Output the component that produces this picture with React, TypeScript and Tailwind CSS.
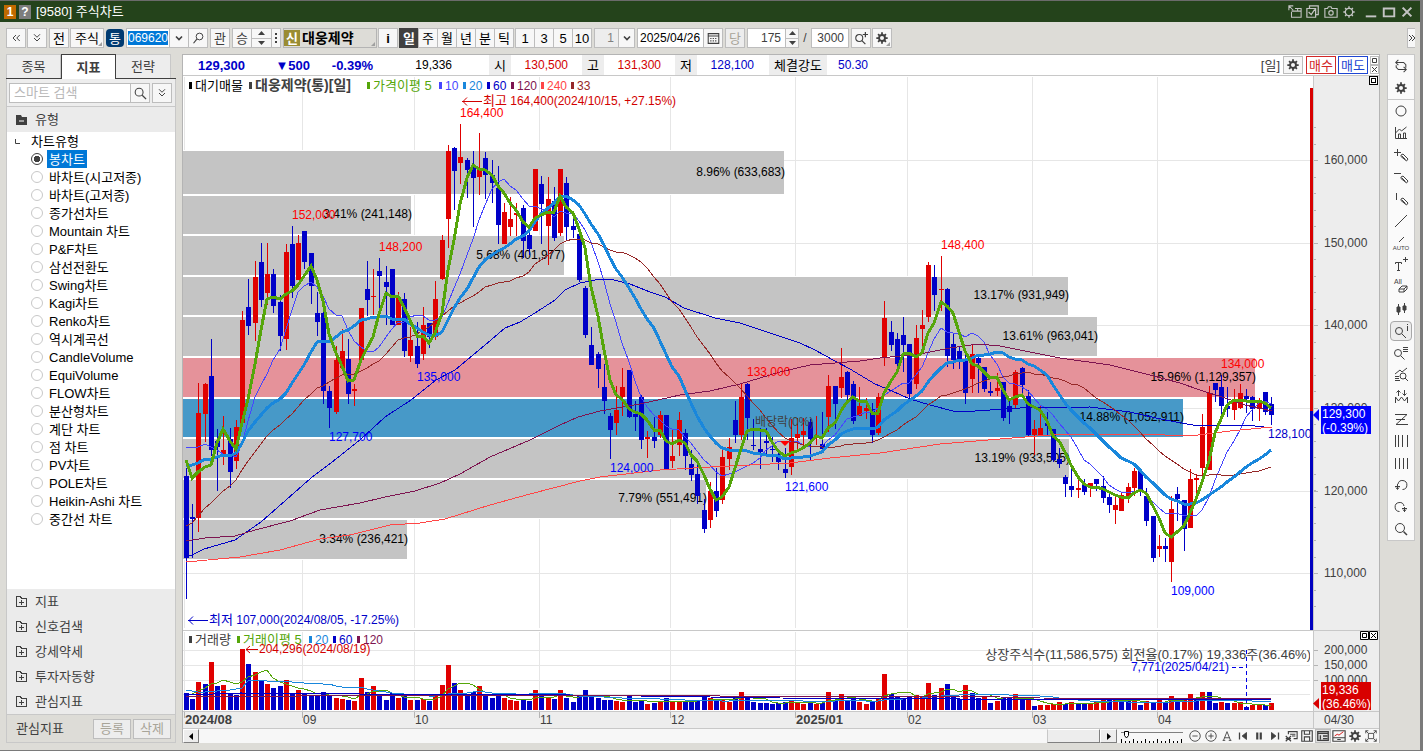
import type { ReactNode } from "react";
import { cva } from "class-variance-authority";
import clsx from "clsx";

// [direction, high, body top, body bottom, low] on the chart canvas, one row per session
type Candle = [1 | -1, number, number, number, number];

const CANDLES: Candle[] = [
  [-1, 468, 476, 558, 599], [-1, 504, 517, 519, 558], [1, 383, 413, 518, 532], [1, 383, 384, 414, 442], [-1, 339, 376, 450, 456],
  [-1, 429, 441, 447, 491], [1, 416, 450, 455, 465], [-1, 428, 439, 472, 488], [1, 420, 427, 461, 469], [1, 311, 320, 423, 425],
  [-1, 279, 307, 326, 335], [1, 261, 277, 323, 341], [-1, 243, 262, 300, 307], [1, 243, 274, 293, 305], [-1, 269, 274, 306, 313],
  [-1, 295, 302, 336, 351], [1, 244, 252, 339, 350], [-1, 226, 244, 286, 298], [1, 235, 243, 280, 280], [-1, 231, 231, 262, 269],
  [-1, 253, 253, 286, 304], [-1, 292, 313, 322, 336], [-1, 308, 313, 391, 404], [-1, 386, 391, 408, 428], [1, 346, 360, 412, 414],
  [1, 329, 351, 368, 368], [-1, 339, 359, 394, 404], [1, 384, 389, 391, 406], [1, 308, 308, 360, 360], [-1, 261, 289, 300, 316],
  [1, 269, 296, 297, 315], [-1, 258, 271, 276, 309], [-1, 266, 282, 287, 325], [-1, 269, 269, 325, 325], [1, 292, 298, 325, 325],
  [-1, 293, 299, 351, 357], [1, 327, 340, 356, 362], [-1, 322, 346, 364, 368], [1, 307, 325, 354, 360], [-1, 323, 323, 337, 348],
  [1, 281, 299, 337, 340], [1, 235, 240, 279, 280], [1, 145, 151, 219, 248], [-1, 147, 148, 171, 210], [1, 124, 157, 163, 184],
  [-1, 158, 160, 170, 198], [-1, 151, 168, 178, 227], [1, 133, 169, 177, 195], [-1, 152, 158, 175, 199], [-1, 160, 175, 183, 203],
  [-1, 166, 188, 225, 244], [1, 203, 212, 244, 244], [1, 197, 219, 227, 236], [1, 203, 213, 215, 236], [-1, 205, 208, 241, 258],
  [-1, 232, 235, 249, 255], [1, 169, 169, 231, 231], [-1, 176, 184, 204, 244], [1, 177, 199, 226, 265], [-1, 187, 201, 238, 241],
  [1, 169, 169, 233, 236], [-1, 177, 183, 227, 240], [-1, 213, 226, 230, 238], [-1, 231, 234, 280, 282], [-1, 286, 288, 335, 338],
  [-1, 327, 345, 365, 365], [-1, 352, 354, 369, 388], [-1, 364, 387, 401, 414], [-1, 413, 416, 430, 459], [1, 386, 410, 423, 435],
  [1, 368, 387, 397, 416], [-1, 370, 370, 417, 418], [-1, 401, 414, 417, 431], [-1, 395, 397, 440, 449], [1, 431, 437, 439, 458],
  [-1, 417, 437, 441, 448], [1, 411, 415, 435, 438], [-1, 415, 415, 470, 470], [1, 429, 456, 461, 468], [1, 412, 420, 445, 456],
  [-1, 429, 433, 456, 470], [-1, 450, 464, 475, 481], [-1, 465, 474, 496, 504], [-1, 499, 510, 529, 533], [1, 482, 491, 520, 528],
  [-1, 468, 491, 511, 517], [1, 449, 457, 500, 504], [1, 438, 447, 459, 470], [-1, 401, 420, 435, 443], [1, 384, 397, 435, 440],
  [-1, 383, 384, 418, 440], [-1, 419, 445, 446, 450], [-1, 428, 449, 452, 469], [-1, 428, 441, 443, 457], [-1, 437, 449, 450, 462],
  [-1, 449, 454, 462, 470], [-1, 448, 469, 473, 478], [1, 419, 438, 467, 475], [1, 418, 434, 438, 450], [1, 418, 431, 435, 445],
  [-1, 419, 422, 439, 460], [1, 416, 437, 438, 445], [-1, 412, 444, 449, 451], [1, 375, 386, 417, 432], [-1, 386, 386, 404, 429],
  [1, 348, 377, 388, 398], [-1, 371, 372, 395, 400], [-1, 381, 384, 421, 424], [1, 387, 406, 416, 416], [1, 398, 408, 411, 419],
  [-1, 403, 409, 435, 443], [1, 393, 397, 433, 435], [1, 301, 318, 358, 366], [-1, 321, 332, 345, 351], [-1, 333, 339, 364, 367],
  [-1, 317, 335, 345, 372], [-1, 344, 344, 394, 400], [1, 325, 338, 384, 389], [1, 310, 325, 329, 348], [1, 262, 265, 317, 322],
  [-1, 265, 277, 295, 311], [1, 256, 289, 290, 311], [-1, 288, 289, 356, 367], [-1, 333, 344, 360, 369], [-1, 347, 351, 359, 369],
  [-1, 355, 359, 393, 404], [1, 344, 354, 379, 393], [-1, 355, 358, 363, 393], [-1, 367, 367, 389, 392], [-1, 382, 391, 393, 396],
  [1, 373, 388, 391, 396], [-1, 382, 382, 418, 421], [-1, 400, 406, 412, 424], [1, 370, 372, 405, 408], [-1, 367, 368, 385, 394],
  [-1, 390, 396, 435, 436], [1, 420, 429, 435, 455], [1, 405, 428, 435, 435], [-1, 412, 423, 426, 435], [-1, 429, 429, 460, 462],
  [-1, 448, 459, 464, 468], [-1, 475, 477, 484, 497], [-1, 465, 486, 490, 497], [1, 477, 488, 490, 498], [-1, 479, 485, 492, 495],
  [1, 483, 483, 488, 497], [-1, 479, 479, 484, 491], [-1, 476, 486, 498, 503], [-1, 493, 497, 505, 513], [1, 497, 505, 510, 524],
  [1, 492, 495, 511, 511], [1, 483, 487, 498, 503], [1, 468, 471, 488, 496], [-1, 471, 471, 492, 496], [-1, 488, 496, 521, 526],
  [-1, 516, 516, 558, 562], [1, 535, 546, 549, 557], [-1, 538, 546, 549, 562], [1, 496, 509, 562, 582], [-1, 487, 494, 499, 521],
  [-1, 500, 500, 529, 551], [1, 469, 479, 528, 528], [1, 474, 478, 480, 495], [1, 414, 427, 468, 475], [1, 386, 393, 470, 470],
  [-1, 383, 383, 390, 402], [-1, 375, 387, 406, 417], [-1, 387, 406, 409, 417], [1, 389, 400, 410, 420], [1, 384, 393, 408, 409],
  [-1, 389, 396, 399, 413], [-1, 396, 397, 409, 421], [1, 398, 403, 409, 421], [-1, 392, 392, 412, 415], [-1, 397, 404, 415, 425],
];

// bar heights, negative when the volume bar is blue
const VOLUMES = [
  -17, -11, 28, -26, 48, -24, 25, -16, -15, 61, -46, 38, -30, 26, -22, -24, 30, -16, 20, -16,
  -14, -15, -18, -14, 12, 11, -10, 9, 32, -18, 24, -14, -10, -17, 12, -14, 10, -10, 11, -9,
  16, 25, 45, -27, 20, -16, -18, 24, -14, -12, -14, 12, 10, 9, -11, -9, 20, -14, 12, -11,
  20, -12, -8, -14, -20, -14, -12, -10, -10, 9, 8, -14, -8, -9, 6, -7, 9, -12, 8, 9,
  -8, -9, -10, -13, 12, -9, 10, 8, -14, 18, -13, -8, -7, -7, -6, -7, -8, 10, 7, 6,
  -8, 6, -7, 18, -9, 16, -10, -12, 8, 6, -9, 11, 36, -16, -13, -12, -14, 15, 13, 27,
  -15, 22, -26, -14, -11, 25, -17, -12, 13, -7, 9, -13, -12, 16, -11, 10, -4, 5, 5, 6,
  8, -6, 8, -7, -6, 7, 8, 10, -11, 11, -10, -9, 9, -5, 9, -8, 10, -7, 14, -10,
  10, 16, -10, 18, -18, -7, 8, -7, 7, 8, -3, 5, 6, -5, 7,
];

type Point = [number, number];

const MA60: Point[] = [
  [186, 556], [192, 555], [204, 549], [211, 547], [235, 540], [248, 531], [261, 522], [286, 500], [311, 478], [336, 459], [361, 439],
  [385, 417], [411, 400], [436, 380], [455, 370], [485, 345], [505, 328], [520, 322], [535, 313], [555, 300], [565, 290], [580, 283],
  [600, 279], [610, 279], [630, 284], [650, 292], [665, 297], [684, 308], [715, 318], [740, 323], [770, 333], [800, 343], [815, 350],
  [835, 361], [850, 369], [875, 384], [892, 391], [910, 399], [930, 405], [953, 411], [975, 411], [1020, 408], [1090, 407], [1130, 412],
  [1165, 420], [1193, 425], [1247, 425], [1272, 428],
];
const MA120: Point[] = [
  [186, 541], [205, 538], [235, 536], [255, 530], [290, 521], [320, 510], [360, 503], [385, 497], [415, 491], [440, 483], [460, 474],
  [490, 457], [530, 440], [560, 425], [578, 417], [600, 411], [640, 404], [680, 395], [710, 391], [740, 384], [780, 372], [810, 365],
  [860, 361], [880, 358], [920, 354], [950, 348], [978, 344], [1000, 346], [1060, 358], [1110, 365], [1150, 375], [1180, 383],
  [1200, 390], [1225, 398], [1245, 405], [1272, 411],
];
const MA240: Point[] = [
  [186, 562], [240, 557], [280, 550], [320, 539], [350, 535], [390, 525], [420, 523], [445, 519], [490, 505], [530, 494], [580, 481],
  [600, 477], [660, 470], [710, 467], [790, 463], [830, 458], [880, 453], [940, 444], [1000, 439], [1050, 435], [1140, 434],
  [1190, 436], [1230, 431], [1272, 427],
];

const STEP = 1085 / 174;
const barX = (i: number) => Math.round(186 + STEP * i);

// moving average; `lead` covers the sessions before the window is full
function average(values: number[], span: number, lead: number[]): Point[] {
  return values.map((_, i) => {
    if (i < lead.length) return [barX(i), lead[i]];
    const from = Math.max(0, i - span + 1);
    const part = values.slice(from, i + 1);
    return [barX(i), part.reduce((a, b) => a + b, 0) / part.length];
  });
}

const closes = CANDLES.map(([dir, , top, bottom]) => (dir > 0 ? top : bottom));
const volumeTops = VOLUMES.map((v) => 710 - Math.abs(v));

const MA5 = average(closes, 5, [460, 478, 472, 467]);
const MA10 = average(closes, 10, [447, 448, 447, 444, 447, 450, 454, 455, 457]);
const MA20 = average(closes, 20, [465, 465, 463, 459, 459, 457, 455, 456, 453, 443, 431, 422, 415, 408, 403, 399, 393, 383, 374]);
const MA33 = average(closes, 33, [
  526, 523, 516, 508, 503, 497, 491, 486, 480, 470, 461, 452, 444, 436, 430, 425, 419, 414, 407, 400, 394, 388, 386, 382, 378, 375, 374,
  374, 371, 368, 364, 361,
]);

const PROFILE = [
  { y: 151, h: 43, end: 784, label: "8.96% (633,683)", fill: "#c4c4c4" },
  { y: 196, h: 38, end: 411, label: "3.41% (241,148)", fill: "#c4c4c4" },
  { y: 236, h: 39, end: 564, label: "5.68% (401,977)", fill: "#c4c4c4" },
  { y: 277, h: 38, end: 1068, label: "13.17% (931,949)", fill: "#c4c4c4" },
  { y: 317, h: 39, end: 1097, label: "13.61% (963,041)", fill: "#c4c4c4" },
  { y: 358, h: 39, end: 1255, label: "15.96% (1,129,357)", fill: "#e5929a" },
  { y: 399, h: 38, end: 1183, label: "14.88% (1,052,911)", fill: "#4799c8" },
  { y: 439, h: 39, end: 1069, label: "13.19% (933,505)", fill: "#c4c4c4" },
  { y: 480, h: 38, end: 706, label: "7.79% (551,491)", fill: "#c4c4c4" },
  { y: 520, h: 39, end: 407, label: "3.34% (236,421)", fill: "#c4c4c4" },
];

const MARKS = [
  { x: 460, y: 117, text: "164,400", fill: "#f00" },
  { x: 292, y: 219, text: "152,000", fill: "#f00" },
  { x: 379, y: 251, text: "148,200", fill: "#f00" },
  { x: 417, y: 381, text: "135,000", fill: "#00f" },
  { x: 329, y: 441, text: "127,700", fill: "#00f" },
  { x: 610, y: 472, text: "124,000", fill: "#00f" },
  { x: 747, y: 376, text: "133,000", fill: "#f00" },
  { x: 785, y: 491, text: "121,600", fill: "#00f" },
  { x: 941, y: 249, text: "148,400", fill: "#f00" },
  { x: 1221, y: 368, text: "134,000", fill: "#f00" },
  { x: 1171, y: 595, text: "109,000", fill: "#00f" },
  { x: 1268, y: 438, text: "128,100", fill: "#0000c8" },
];

const MONTHS = [
  { x: 184, label: "2024/08", year: true },
  { x: 302, label: "09" },
  { x: 414, label: "10" },
  { x: 539, label: "11" },
  { x: 670, label: "12" },
  { x: 795, label: "2025/01", year: true },
  { x: 907, label: "02" },
  { x: 1032, label: "03" },
  { x: 1157, label: "04" },
];

const PRICE_LEGEND = [
  { x: 189, label: "대기매물", fill: "#000" },
  { x: 249, label: "대웅제약(통)[일]", fill: "#404040", bold: true },
  { x: 367, label: "가격이평 5", fill: "#55a60a" },
  { x: 439, label: "10", fill: "#4646ff" },
  { x: 463, label: "20", fill: "#1987dc" },
  { x: 487, label: "60", fill: "#0000c8" },
  { x: 511, label: "120", fill: "#7d1450" },
  { x: 541, label: "240", fill: "#ff4646" },
  { x: 571, label: "33", fill: "#962828" },
];

const VOLUME_LEGEND = [
  { x: 189, label: "거래량", fill: "#404040" },
  { x: 237, label: "거래이평 5", fill: "#55a60a" },
  { x: 309, label: "20", fill: "#1987dc" },
  { x: 333, label: "60", fill: "#0000c8" },
  { x: 357, label: "120", fill: "#7d1450" },
];

const CHART_TYPES = [
  "봉차트", "바차트(시고저종)", "바차트(고저종)", "종가선차트", "Mountain 차트", "P&F차트", "삼선전환도", "Swing차트", "Kagi차트",
  "Renko차트", "역시계곡선", "CandleVolume", "EquiVolume", "FLOW차트", "분산형차트", "계단 차트", "점 차트", "PV차트", "POLE차트",
  "Heikin-Ashi 차트", "중간선 차트",
];

const GROUPS = ["지표", "신호검색", "강세약세", "투자자동향", "관심지표"];

const button = cva("flex shrink-0 items-center justify-center border text-[13px] leading-none", {
  variants: {
    tone: {
      normal: "border-[#bdbdbd] bg-[#f7f7f7] text-black",
      icon: "border-[#bdbdbd] bg-[#f7f7f7] text-[#404040]",
      active: "border-[#404040] bg-[#404040] font-bold text-white",
      muted: "border-[#bdbdbd] bg-[#ededed] text-[#a8a498]",
      flat: "border-[#b4b4b4] bg-[#dddcd7] font-bold text-black",
    },
    height: { normal: "h-5", small: "h-[18px]" },
  },
  defaultVariants: { tone: "normal", height: "normal" },
});

function Icon({ children, size = 16, className }: { children: ReactNode; size?: number; className?: string }) {
  return (
    <svg width={size} height={size} viewBox="0 0 16 16" fill="none" stroke="currentColor" className={clsx("shrink-0 overflow-visible", className)} aria-hidden="true">
      {children}
    </svg>
  );
}

const Gear = ({ size = 14, hollow = false }: { size?: number; hollow?: boolean }) => (
  <Icon size={size}>
    <path d="M8 1.500v3M8 11.500v3M1.500 8h3M11.500 8h3M3.500 3.500l2 2M10.500 10.500l2 2M12.500 3.500l-2 2M5.500 10.500l-2 2" strokeWidth={hollow ? 1.6 : 2} />
    <circle cx="8" cy="8" r={hollow ? 4.2 : 3.4} strokeWidth={hollow ? 1.5 : 2.2} />
  </Icon>
);

const Lens = ({ size = 14 }: { size?: number }) => (
  <Icon size={size}>
    <circle cx="7" cy="7" r="4.500" strokeWidth="1.2" />
    <path d="M10.500 10.500L15 15" strokeWidth="1.500" />
  </Icon>
);

const Chevrons = ({ dir }: { dir: "left" | "down" }) => (
  <Icon size={12}>
    {dir === "left" && <path d="M8 4L4 8l4 4M13 4L9 8l4 4" strokeWidth="1.3" />}
    {dir === "down" && <path d="M4 3l4 4 4-4M4 8l4 4 4-4" strokeWidth="1.3" />}
  </Icon>
);

const Caret = () => (
  <Icon size={12}>
    <path d="M4 6l4 4 4-4" strokeWidth="2.2" />
  </Icon>
);

function Spinner({ label, className }: { label: string; className?: string }) {
  return (
    <div className={clsx("-ml-px flex h-5 flex-col border border-[#bdbdbd] bg-[#f7f7f7]", className)}>
      <button aria-label={`${label} 증가`} className="flex flex-1 items-center justify-center border-b border-[#bdbdbd]">
        <svg width="7" height="4"><path d="M0 4L3.500 0L7 4z" fill="#404040" /></svg>
      </button>
      <button aria-label={`${label} 감소`} className="flex flex-1 items-center justify-center">
        <svg width="7" height="4"><path d="M0 0L3.500 4L7 0z" fill="#404040" /></svg>
      </button>
    </div>
  );
}

function TitleBar() {
  return (
    <header className="flex h-[22px] shrink-0 items-center border-t border-[#6b6b6b] bg-[#24431b] pl-1 text-white">
      <span className="flex h-3.5 w-3 items-center justify-center bg-[#c06a00] text-[12px] leading-none font-bold">1</span>
      <span className="ml-[3px] flex h-3.5 w-3 items-center justify-center bg-[#7d7d7d] text-[12px] leading-none font-bold">?</span>
      <h1 className="ml-[5px] text-[13px] leading-none">[9580] 주식차트</h1>
      <div className="ml-auto flex items-center gap-1 pr-1.5 text-[#c4c4c4]">
        <button aria-label="창 분리">
          <Icon size={14}><path d="M1 6V1h5M1 1l5 5M8 4h7v10H4V8M4 7h11M11 4v3" strokeWidth="1.2" /></Icon>
        </button>
        <button aria-label="창 복사">
          <Icon size={14}><path d="M1 4h10v10H1zM4 4V1h10v10h-3M3 8l3 3 4-6" strokeWidth="1.4" /></Icon>
        </button>
        <button aria-label="화면 캡처">
          <Icon size={14}><path d="M1 4h3l1-2h3l1 2h6v10H1z" strokeWidth="1.3" /><circle cx="8" cy="9" r="2.500" strokeWidth="1.3" /></Icon>
        </button>
        <button aria-label="설정"><Gear hollow /></button>
        <button aria-label="최소화" className="ml-1">
          <Icon size={14}><path d="M2 13h12" strokeWidth="2.200" /></Icon>
        </button>
        <button aria-label="최대화">
          <Icon size={14}><path d="M2 4h12v9H2z" strokeWidth="2.200" /></Icon>
        </button>
        <button aria-label="닫기">
          <Icon size={14}><path d="M3 3l10 10M13 3L3 13" strokeWidth="2.4" /></Icon>
        </button>
      </div>
    </header>
  );
}

function Toolbar() {
  return (
    <div className="flex h-8 shrink-0 items-center gap-0.5 pl-1.5 text-[#404040]">
      <div className="flex gap-px">
        <button className={clsx(button({ tone: "icon" }), "w-5")} aria-label="이전"><Chevrons dir="left" /></button>
        <button className={clsx(button({ tone: "icon" }), "w-5")} aria-label="펼치기"><Chevrons dir="down" /></button>
      </div>
      <div className="flex gap-px">
        <button className={clsx(button(), "w-5")}>전</button>
        <button className={clsx(button(), "relative w-[34px]")}>
          주식
          <Corner />
        </button>
      </div>
      <button className="flex h-[18px] w-[18px] items-center justify-center rounded-sm bg-[#003a70] text-[13px] leading-none text-white">통</button>
      <div className="flex">
        <div className="flex h-5 w-11 items-center border border-[#bdbdbd] bg-white px-px">
          <input aria-label="종목코드" defaultValue="069620" className="h-3.5 w-10 bg-[#0078d7] text-[12px] leading-none text-white outline-none" />
        </div>
        <button className={clsx(button({ tone: "icon" }), "-ml-px w-5")} aria-label="최근 종목"><Caret /></button>
        <button className={clsx(button({ tone: "icon" }), "-ml-px w-5")} aria-label="종목 찾기">
          <Icon size={12}><circle cx="10" cy="6" r="4.500" strokeWidth="1.3" /><path d="M6.500 9.500L2 15" strokeWidth="1.500" /></Icon>
        </button>
      </div>
      <button className={clsx(button({ tone: "icon" }), "w-5")}>관</button>
      <div className="flex">
        <button className={clsx(button({ tone: "icon" }), "w-5")}>승</button>
        <Spinner label="종목" className="w-[21px]" />
        <button className={clsx(button({ tone: "icon" }), "-ml-px w-2.5")} aria-label="더 보기">
          <svg width="2" height="11" fill="#404040"><path d="M0 0h2v2H0zM0 4h2v2H0zM0 8h2v2H0z" /></svg>
        </button>
      </div>
      <div className="flex gap-px">
        <button className={clsx(button({ tone: "flat" }), "relative w-[94px] gap-0.5")}>
          <span className="flex h-4 w-4 items-center justify-center bg-[#9a8c32] text-white">신</span>
          <span className="flex-1 text-left text-[14px]">대웅제약</span>
          <Corner />
        </button>
        <button className={clsx(button(), "w-5 font-bold")} aria-label="종목정보">i</button>
        <div className="flex">
          {["일", "주", "월", "년", "분", "틱"].map((p, i) => (
            <button key={p} className={clsx(button({ tone: i === 0 ? "active" : "normal" }), "w-5", i > 0 && "-ml-px")}>
              {p}
            </button>
          ))}
        </div>
      </div>
      <div className="flex">
        {["1", "3", "5", "10"].map((n) => (
          <button key={n} className={clsx(button(), "-ml-px w-5")}>{n}</button>
        ))}
      </div>
      <div className="flex">
        <input aria-label="분 단위" defaultValue="1" className="h-5 w-[25px] border border-[#bdbdbd] bg-[#ededed] pr-1 text-right text-[12px] text-[#808080]" />
        <button className={clsx(button({ tone: "icon" }), "-ml-px w-[17px]")} aria-label="분 단위 선택"><Caret /></button>
      </div>
      <div className="flex">
        <input aria-label="조회일" defaultValue="2025/04/26" className="h-5 w-[67px] border border-[#bdbdbd] bg-white px-0.5 text-[12px] text-black" />
        <button className={clsx(button({ tone: "icon" }), "-ml-px w-5")} aria-label="달력">
          <Icon size={13}><path d="M1.500 2h13v12h-13zM1 5h14" strokeWidth="1.300" /><path d="M4 8h9M4 11h9" strokeDasharray="1.500 1.500" strokeWidth="1.500" /></Icon>
        </button>
      </div>
      <button className={clsx(button({ tone: "muted" }), "w-5")}>당</button>
      <div className="flex">
        <input aria-label="표시 봉 수" defaultValue="175" className="h-5 w-[39px] border border-[#bdbdbd] bg-white pr-1 text-right text-[12px]" />
        <Spinner label="표시 봉 수" className="w-3.5" />
      </div>
      <span className="w-2 text-center text-[12px] leading-none">/</span>
      <input aria-label="전체 봉 수" defaultValue="3000" className="h-5 w-[38px] border border-[#bdbdbd] bg-white pr-1 text-right text-[12px]" />
      <div className="flex gap-px">
        <button className={clsx(button({ tone: "icon" }), "w-5")} aria-label="확대">
          <Icon size={14}><circle cx="6" cy="8" r="4" strokeWidth="1.200" /><path d="M9 11l4 4M10 4h6M13 1v6" strokeWidth="1.400" /></Icon>
        </button>
        <button className={clsx(button({ tone: "icon" }), "relative w-5")} aria-label="차트 설정"><Gear /><Corner /></button>
      </div>
      <button className="mr-[5px] ml-auto flex h-5 w-2 items-center justify-center border border-r-0 border-[#bdbdbd] bg-[#f7f7f7]" aria-label="도구모음 펼치기">
        <svg width="6" height="6" fill="none" stroke="#404040" aria-hidden="true"><path d="M0 0l3 3-3 3M3 0l3 3-3 3" /></svg>
      </button>
    </div>
  );
}

const Corner = () => (
  <svg width="4" height="4" className="absolute right-px bottom-px" aria-hidden="true">
    <path d="M4 0v4H0z" fill="#a0a0a0" />
  </svg>
);

function Sidebar() {
  return (
    <aside className="ml-1.5 flex w-[170px] shrink-0 flex-col text-[13px] leading-none text-[#404040]">
      <div className="flex h-[25px] shrink-0 border-b border-[#404040]">
        <button className="w-[55px] border border-b-0 border-[#c8c8c8] bg-[#ededed]">종목</button>
        <button className="-mb-px w-[55px] border border-b-0 border-[#404040] bg-white font-bold">지표</button>
        <button className="w-[55px] border border-b-0 border-l-0 border-[#c8c8c8] bg-[#ededed]">전략</button>
      </div>
      <div className="flex min-h-0 flex-1 flex-col border border-t-0 border-[#c8c8c8] bg-white">
        <div className="flex h-7 shrink-0 items-center border-b border-[#c8c8c8] bg-[#ededed] px-0.5">
          <input aria-label="스마트 검색" placeholder="스마트 검색" className="h-5 w-[122px] border border-[#bdbdbd] bg-white px-1 placeholder:text-[#b8b8b8]" />
          <button className={clsx(button({ tone: "icon" }), "-ml-px w-5")} aria-label="검색"><Lens /></button>
          <button className={clsx(button({ tone: "icon" }), "ml-0.5 w-5")} aria-label="검색 옵션"><Chevrons dir="down" /></button>
        </div>
        <h2 className="flex h-[25px] shrink-0 items-center gap-2 bg-[#ebebeb] pl-[9px]">
          <svg width="11" height="10" aria-hidden="true">
            <path d="M0 0h5l1 2h5v8H0z" fill="#404040" />
            <path d="M3 6h5" stroke="#fff" />
          </svg>
          유형
        </h2>
        <fieldset className="min-h-0 flex-1 overflow-hidden text-black">
          <div className="flex h-[18px] items-center">
            <svg width="5" height="5" className="mr-[11px] ml-2" aria-hidden="true"><path d="M.5 0v4.500H5" fill="none" stroke="#404040" /></svg>
            <legend>차트유형</legend>
          </div>
          {CHART_TYPES.map((type, i) => (
            <label key={type} className="flex h-[18px] items-center gap-1 pl-6">
              <input
                type="radio"
                name="chart-type"
                defaultChecked={i === 0}
                className="h-3 w-3 appearance-none rounded-full border border-[#c8c8c8] bg-white checked:border-[#404040] checked:bg-[radial-gradient(circle,#404040_45%,#fff_50%)]"
              />
              <span className={clsx("flex h-[18px] items-center px-0.5", i === 0 && "bg-[#0078d7] text-white")}>{type}</span>
            </label>
          ))}
        </fieldset>
        <ul className="shrink-0 bg-[#ebebeb]">
          {GROUPS.map((g) => (
            <li key={g}>
              <button className="flex h-[25px] w-full items-center gap-2 pl-[9px]">
                <svg width="11" height="11" fill="none" stroke="#404040" aria-hidden="true">
                  <path d="M.5 .5h4l1 2h5v8H.5zM3 6.500h5M5.500 4v5" shapeRendering="crispEdges" />
                </svg>
                {g}
              </button>
            </li>
          ))}
        </ul>
        <div className="flex h-7 shrink-0 items-center border-t border-[#c8c8c8] bg-[#dddcd7] pl-[9px]">
          관심지표
          <button className={clsx(button({ tone: "muted" }), "ml-auto w-[38px]")}>등록</button>
          <button className={clsx(button({ tone: "muted" }), "mr-1 ml-0.5 w-[38px]")}>삭제</button>
        </div>
      </div>
    </aside>
  );
}

function QuoteBar() {
  return (
    <div className="flex h-[21px] shrink-0 items-center border-b border-[#c8c8c8] text-[12px] leading-none">
      <b className="w-[62px] text-right text-[13px] text-[#0000c8]">129,300</b>
      <b className="w-[65px] text-right text-[13px] text-[#0000c8]">▼500</b>
      <b className="w-[63px] text-right text-[13px] text-[#0000c8]">-0.39%</b>
      <span className="w-[79px] text-right">19,336</span>
      <Quote label="시" value="130,500" first />
      <Quote label="고" value="131,300" />
      <Quote label="저" value="128,100" low />
      <span className="ml-[15px] flex h-5 w-[58px] items-center justify-center bg-[#ededed] text-[13px]">체결강도</span>
      <span className="w-[41px] text-right text-[#0000c8]">50.30</span>
      <span className="ml-auto text-[13px] text-[#404040]">[일]</span>
      <button className={clsx(button({ tone: "icon", height: "small" }), "mx-[3px] w-5")} aria-label="차트 설정"><Gear /></button>
      <button className="mr-0.5 h-[18px] w-[30px] border border-[#d22828] text-[13px] text-[#d22828]">매수</button>
      <button className="mr-0.5 h-[18px] w-[30px] border border-[#1e46d2] text-[13px] text-[#1e46d2]">매도</button>
      <div className="flex flex-col">
        <button className="flex h-[9px] w-[9px] items-center justify-center border border-[#bdbdbd]" aria-label="최대화">
          <svg width="5" height="5"><path d="M.5 .5h4v4h-4z" fill="none" stroke="#404040" /></svg>
        </button>
        <button className="flex h-[9px] w-[9px] items-center justify-center border border-[#bdbdbd]" aria-label="닫기">
          <svg width="5" height="5"><path d="M0 0l5 5M5 0L0 5" stroke="#404040" /></svg>
        </button>
      </div>
    </div>
  );
}

function Quote({ label, value, low = false, first = false }: { label: string; value: string; low?: boolean; first?: boolean }) {
  return (
    <>
      <span className={clsx("flex h-5 w-[22px] items-center justify-center bg-[#ededed] text-[13px]", first ? "ml-[37px]" : "ml-3.5")}>{label}</span>
      <span className={clsx("w-[57px] text-right", low ? "text-[#0000c8]" : "text-[#d20000]")}>{value}</span>
    </>
  );
}

function Line({ points, color, width = 1 }: { points: Point[]; color: string; width?: number }) {
  return <polyline points={points.map(([x, y]) => `${x},${Math.round(y)}`).join(" ")} fill="none" stroke={color} strokeWidth={width} shapeRendering="crispEdges" />;
}

function Legend({ items, y }: { items: { x: number; label: string; fill: string; bold?: boolean }[]; y: number }) {
  return (
    <>
      {items.map((item) => (
        <g key={item.x} fill={item.fill}>
          <rect x={item.x} y={y - 8} width="3" height="7" />
          <text x={item.x + 6} y={y} className={item.bold ? "text-[14px] font-bold" : /[가-힣]/.test(item.label) ? "text-[13px]" : "text-[12px]"}>
            {item.label}
          </text>
        </g>
      ))}
    </>
  );
}

function PricePane() {
  return (
    <svg className="block min-h-0 w-full flex-1 text-[12px]" role="img" aria-label="대웅제약 일봉 차트">
      <g transform="translate(-183 -76)">
        <g fill="#e6e6e6">
          {MONTHS.map((m) => <rect key={m.x} x={m.x} y="77" width="1" height="551" />)}
          {[160, 243, 325, 408, 491, 573].map((y) => <rect key={y} x="183" y={y} width="1128" height="1" />)}
        </g>
        {PROFILE.map((p) => (
          <g key={p.y}>
            <rect x="183" y={p.y - 1} width={p.end - 183} height={p.h + 2} fill="#fff" />
            <rect x="183" y={p.y} width={p.end - 183} height={p.h} fill={p.fill} />
            <text x={p.end + 1} y={p.y + Math.round(p.h / 2) + 3} textAnchor="end">{p.label}</text>
          </g>
        ))}
        <g shapeRendering="crispEdges">
          {CANDLES.map(([dir, high, top, bottom, low], i) => (
            <g key={i} fill={dir > 0 ? "#e00000" : "#0000c8"}>
              <rect x={barX(i)} y={high} width="1" height={low - high} />
              <rect x={barX(i) - 2} y={top} width="5" height={Math.max(1, bottom - top)} />
            </g>
          ))}
        </g>
        <Line points={MA10} color="#4646ff" />
        <Line points={MA60} color="#0000c8" />
        <Line points={MA120} color="#7d1450" />
        <Line points={MA240} color="#ff4646" />
        <Line points={MA33} color="#962828" />
        <Line points={MA20} color="#1987dc" width={3} />
        <Line points={MA5} color="#55a60a" width={3} />
        <text x="755" y="426" fill="#404040">배당락(0%)</text>
        <path d="M780 441h10l-5 5z" fill="#f00" />
        {MARKS.map((m) => <text key={m.text} x={m.x} y={m.y} fill={m.fill}>{m.text}</text>)}
        <path d="M482 101.500H462M467 97.500l-4 4l4 4" fill="none" stroke="#d20000" />
        <text x="483" y="105" fill="#d20000"><tspan className="text-[13px]">최고</tspan> 164,400(2024/10/15, +27.15%)</text>
        <path d="M208 620.500H188M193 616.500l-4 4l4 4" fill="none" stroke="#0000c8" />
        <text x="209" y="624" fill="#0000c8"><tspan className="text-[13px]">최저</tspan> 107,000(2024/08/05, -17.25%)</text>
        <Legend items={PRICE_LEGEND} y={90} />
      </g>
    </svg>
  );
}

function VolumePane() {
  return (
    <svg className="block h-20 w-full shrink-0 text-[12px]" role="img" aria-label="거래량">
      <g transform="translate(-183 -631)">
        <g fill="#e6e6e6">
          {MONTHS.map((m) => <rect key={m.x} x={m.x} y="632" width="1" height="79" />)}
          {[650, 665, 680, 694].map((y) => <rect key={y} x="183" y={y} width="1128" height="1" />)}
        </g>
        {VOLUMES.map((v, i) => (
          <rect key={i} x={barX(i) - 2} y={710 - Math.abs(v)} width="5" height={Math.abs(v)} fill={v > 0 ? "#e00000" : "#0000c8"} />
        ))}
        <Line points={average(volumeTops, 5, [694, 694, 691, 688])} color="#55a60a" />
        <Line points={average(volumeTops, 20, [690, 691, 692, 692, 691, 691, 690, 690, 689, 688])} color="#1987dc" />
        <Line points={[[186, 695], [240, 693], [360, 694], [500, 694], [640, 696], [780, 698], [960, 699], [1271, 700]]} color="#0000c8" />
        <Line points={[[186, 697], [300, 696], [500, 695], [720, 696], [960, 696], [1040, 698], [1271, 699]]} color="#7d1450" />
        <Legend items={VOLUME_LEGEND} y={644} />
        <path d="M258 649.500H246M250 646l-4 3.500l4 3.500" fill="none" stroke="#d20000" />
        <text x="259" y="653" fill="#d20000">204,296(2024/08/19)</text>
        <text x="1311" y="659" textAnchor="end" fill="#404040" className="text-[13px]">상장주식수(11,586,575) 회전율(0.17%) 19,336주(36.46%)</text>
        <text x="1229" y="671" textAnchor="end" fill="#0000e6">7,771(2025/04/21)</text>
        <path d="M1232 667.500h14M1246.500 650v60" stroke="#0000e6" strokeDasharray="4 3" fill="none" />
      </g>
    </svg>
  );
}

const AXIS_LABELS = [
  { y: 160, label: "160,000" },
  { y: 243, label: "150,000" },
  { y: 325, label: "140,000" },
  { y: 408, label: "130,000" },
  { y: 491, label: "120,000" },
  { y: 573, label: "110,000" },
];

function PriceAxis() {
  return (
    <svg className="block min-h-0 w-full flex-1 text-[12px]" role="img" aria-label="가격 축">
      <g transform="translate(-1311 -76)">
        <rect x="1314" y="76" width="1" height="2000" fill="#c8c8c8" />
        <rect x="1315" y="76" width="65" height="2000" fill="#ededed" />
        <rect x="1311" y="88" width="3" height="323" fill="#d80000" />
        <rect x="1311" y="411" width="3" height="219" fill="#0000c0" />
        {Array.from({ length: 30 }, (_, i) => (
          <rect key={i} x="1315" y={Math.round(127 + i * 16.52)} width="2" height="1" fill="#b4b4b4" />
        ))}
        {AXIS_LABELS.map((a) => (
          <g key={a.y}>
            <rect x="1315" y={a.y} width="4" height="1" fill="#b4b4b4" />
            <text x="1325" y={a.y + 4} fill="#404040">{a.label}</text>
          </g>
        ))}
        <path d="M1320 409v12l-6-6z" fill="#00f" />
        <rect x="1322" y="406" width="50" height="28" fill="#00f" />
        <text x="1323" y="418" fill="#fff">129,300</text>
        <text x="1323" y="432" fill="#fff">(-0.39%)</text>
        <rect x="1370.500" y="76.500" width="8" height="8" fill="#fff" stroke="#000" />
        <rect x="1372.500" y="78.500" width="4" height="4" fill="none" stroke="#000" />
      </g>
    </svg>
  );
}

function VolumeAxis() {
  return (
    <svg className="block h-20 w-full shrink-0 text-[12px]" role="img" aria-label="거래량 축">
      <g transform="translate(-1311 -631)">
        <rect x="1314" y="631" width="1" height="80" fill="#c8c8c8" />
        <rect x="1315" y="631" width="65" height="80" fill="#ededed" />
        {["200,000", "150,000", "100,000"].map((label, i) => (
          <g key={label}>
            <rect x="1315" y={650 + i * 15} width="4" height="1" fill="#b4b4b4" />
            <text x="1325" y={654 + i * 15} fill="#404040">{label}</text>
          </g>
        ))}
        <rect x="1322" y="682" width="50" height="28" fill="#d80000" />
        <path d="M1320 698v11l-6-5.500z" fill="#d80000" />
        <text x="1323" y="694" fill="#fff">19,336</text>
        <text x="1323" y="708" fill="#fff">(36.46%)</text>
        <g fill="#fff" stroke="#000">
          <path d="M1361.500 631.500h8v8h-8zM1363.500 633.500h4v4h-4zM1370.500 631.500h8v8h-8z" />
          <path d="M1372 633l5 5M1377 633l-5 5" />
        </g>
      </g>
    </svg>
  );
}

function TimeAxis() {
  return (
    <div className="flex h-[17px] shrink-0 border-t border-[#c8c8c8] bg-[#ededed] text-[12px]">
      <svg className="block h-4 min-w-0 flex-1" role="img" aria-label="날짜 축">
        <g transform="translate(-183 -712)" fill="#404040">
          {MONTHS.map((m) => (
            <g key={m.x}>
              <rect x={m.x} y="712" width="1" height="6" fill="#b4b4b4" />
              <text x={m.x + 1} y="724" className={clsx(m.year && "text-[13px] font-bold")}>{m.label}</text>
            </g>
          ))}
        </g>
      </svg>
      <span className="w-[66px] border-l border-[#c8c8c8] pl-2.5 leading-4 text-[#404040]">04/30</span>
    </div>
  );
}

const FOOT_TOOLS: { label: string; icon: ReactNode; active?: boolean }[] = [
  { label: "축소", icon: <><circle cx="8" cy="8" r="6" /><path d="M5 8h6" /></> },
  { label: "확대", icon: <><circle cx="8" cy="8" r="6" /><path d="M5 8h6M8 5v6" /></> },
  { label: "자동", icon: <path d="M4 13L8 3l4 10M5 10h6M3 13h3M10 13h3" /> },
  { label: "처음", icon: <><path d="M4 4v8" strokeWidth="1.500" /><path d="M12 4v8L7 8z" fill="currentColor" /></> },
  { label: "정지", icon: <path d="M6 4v8M10 4v8" strokeWidth="2.500" /> },
  { label: "마지막", icon: <><path d="M12 4v8" strokeWidth="1.500" /><path d="M4 4v8l5-4z" fill="currentColor" /></> },
  { label: "초기화", icon: <path d="M5 6V3h10v8h-4M7 6h6M9 8h4M2 8l6 6M8 8l-6 6M2 11h6" strokeWidth="1.300" /> },
  { label: "저장", icon: <path d="M2 2h12v12H2zM5 2v4h6V2M5 14V9h6v5" strokeWidth="1.300" /> },
  { label: "표 보기", active: true, icon: <path d="M2 3h12v10H2zM2 5h12M5 7v5M8 8h5M8 11h5" strokeWidth="1.500" /> },
  { label: "차트 보기", icon: <><path d="M1 2h14v12H1zM1 10h14M6 12h4" strokeWidth="1.300" /><path d="M3 8l3-2 2 1 5-4" stroke="#d20000" /></> },
  { label: "설정", icon: <><path d="M8 1.500v3M8 11.500v3M1.500 8h3M11.500 8h3M3.500 3.500l2 2M10.500 10.500l2 2M12.500 3.500l-2 2M5.500 10.500l-2 2" strokeWidth="2" /><circle cx="8" cy="8" r="3.400" strokeWidth="2.200" /></> },
  { label: "전체 화면", icon: <path d="M2 5V2h3M11 2h3v3M14 11v3h-3M5 14H2v-3M5 5h6v6H5zM2 2l3 3M14 2l-3 3M14 14l-3-3M2 14l3-3" /> },
];

function FootBar() {
  return (
    <div className="flex h-[15px] shrink-0 items-center border-t border-[#c8c8c8] bg-[#f7f7f7] text-[#404040]">
      <button className="flex h-3.5 w-4 items-center justify-center border border-t-white border-r-[#808080] border-b-[#808080] border-l-white bg-[#ededed]" aria-label="왼쪽으로">
        <svg width="4" height="7"><path d="M4 0v7L0 3.500z" fill="#000" /></svg>
      </button>
      <div className="flex h-3.5 flex-1 justify-end bg-[#f7f7f7]">
        <div className="w-[53px] border border-t-white border-r-[#808080] border-b-[#808080] border-l-[#c8c8c8] bg-[#ededed]" />
      </div>
      <button className="flex h-3.5 w-[17px] items-center justify-center border border-t-white border-r-[#808080] border-b-[#808080] border-l-white bg-[#ededed]" aria-label="오른쪽으로">
        <svg width="4" height="7"><path d="M0 0v7l4-3.500z" fill="#000" /></svg>
      </button>
      <svg width="62" height="13" className="mx-1" aria-hidden="true">
        <path d="M0 2.500h62" stroke="#808080" />
        <g fill="#000">
          {Array.from({ length: 16 }, (_, i) => <rect key={i} x={i * 4} y={i % 3 === 0 ? 9 : 11} width="1" height="4" />)}
        </g>
        <path d="M3.500 1.500h4v4l-2 2.500l-2-2.500z" fill="#fff" stroke="#000" />
      </svg>
      <div className="flex items-center">
        {FOOT_TOOLS.map((t) => (
          <button key={t.label} aria-label={t.label} className={clsx("flex h-3.5 w-4 items-center justify-center", t.active && "bg-[#e0e0e0] ring ring-[#bdbdbd] ring-inset")}>
            <Icon size={14}>{t.icon}</Icon>
          </button>
        ))}
      </div>
    </div>
  );
}

function ChartPanel() {
  return (
    <main className="ml-1.5 flex min-w-0 flex-1 flex-col border border-b-0 border-[#b4b4b4] bg-white">
      <QuoteBar />
      <div className="flex min-h-0 flex-1">
        <div className="flex min-w-0 flex-1 flex-col">
          <PricePane />
          <div className="h-px bg-[#c8c8c8]" />
          <VolumePane />
        </div>
        <div className="flex w-[69px] shrink-0 flex-col">
          <PriceAxis />
          <div className="h-px bg-[#c8c8c8]" />
          <VolumeAxis />
        </div>
      </div>
      <TimeAxis />
      <FootBar />
    </main>
  );
}

const pencil = <path d="M8 8l2-1 5 5-1.500 2L8 9.500zM9 9l3.500 3.500" />;

const RAIL: { label: string; icon: ReactNode; active?: boolean }[] = [
  { label: "원", icon: <circle cx="8" cy="8" r="5" /> },
  { label: "지표 추가", icon: <path d="M2.500 2v11.500H14M2.500 8l4-4 2 2 5-4M5.500 13V9h2v4M10.500 13V8h2v5" /> },
  { label: "십자선", icon: <>{pencil}<path d="M1 5.500h7M4.500 2v7" /></> },
  { label: "수평선", icon: <>{pencil}<path d="M1 4.500h7" /></> },
  { label: "수직선", icon: <>{pencil}<path d="M3.500 2v7" /></> },
  { label: "추세선", icon: <path d="M2 14L14 2" /> },
  { label: "자동 추세선", icon: <><path d="M6 7l5-5" /><text x="8" y="15" textAnchor="middle" fill="currentColor" stroke="none" className="text-[6px]">AUTO</text></> },
  { label: "문자", icon: <path d="M2.500 7V5.500h6V7M5.500 5.500V13M4 13.500h3M10 2.500h5M12.500 0v5" /> },
  { label: "전체 삭제", icon: <><text x="1" y="5" fill="currentColor" stroke="none" className="text-[7px]">All</text><path d="M6 10l3-3h5v3l-3 3H6zM6 10h5v3M11 10l3-3" /></> },
  { label: "캔들", icon: <><path d="M5.500 3v11M11.500 2v10" /><path d="M4 6h3v5H4zM10 5h3v4h-3z" fill="currentColor" /></> },
  { label: "정보 확대", active: true, icon: <><circle cx="6" cy="8" r="3.500" /><path d="M9 11l4 4M14.500 1v1M14.500 3v5" /></> },
  { label: "목록 확대", icon: <><circle cx="5" cy="8" r="3.500" /><path d="M8 11l3.500 3.500M10 2.500h5M10 4.500h5M10 6.500h5" /></> },
  { label: "차트 분석", icon: <><path d="M2 7l5-4 2 2 5-4M2 9.500h4M2 11.500h4M2 13.500h5" /><circle cx="10" cy="9" r="3" /><path d="M12 11l3 3" /></> },
  { label: "파동", icon: <path d="M2.500 14V8l3 4 3-4 3 4 3-4v6M5.500 7V1.500M3.500 3.500l2-2 2 2M11.500 1v5.500M9.500 4.500l2 2 2-2" /> },
  { label: "피보나치", icon: <path d="M2 3.500h12L3 13.500h12M3 8.500h9" /> },
  { label: "시간대", icon: <path d="M2.500 2v12M5.500 2v12M9.500 2v12M14.500 2v12" /> },
  { label: "등간격선", icon: <path d="M2.500 3v11M6.500 3v11M10.500 3v11M14.500 3v11" /> },
  { label: "되돌리기", icon: <path d="M5 7a4.500 4.500 0 1 1 4.500 5.500M2 9.500h5M4.500 7v5M3 10.500l1.500 2 1.500-2" /> },
  { label: "다시 실행", icon: <path d="M11 7a4.500 4.500 0 1 0-4.500 5.500M9 9.500h5M11.500 8v5M10 10.500l1.500 2 1.500-2" /> },
  { label: "돋보기", icon: <><circle cx="7" cy="7" r="4.500" /><path d="M10.500 10.500L14 14" strokeWidth="1.500" /></> },
];

function ToolRail() {
  return (
    <nav aria-label="차트 도구" className="mr-[5px] ml-[7px] flex w-7 shrink-0 flex-col self-start border border-[#c8c8c8] bg-[#fafafa] text-[#404040]">
      <div className="flex flex-col border-b border-[#c8c8c8]">
        <button aria-label="새로 고침" className="flex h-[22px] items-center justify-center">
          <Icon size={14}><path d="M5 1L2 4l3 3M2 4h9l2.500 2.500V10M11 15l3-3-3-3M14 12H5L2.500 9.500V7" strokeWidth="1.200" /></Icon>
        </button>
        <button aria-label="설정" className="flex h-[22px] items-center justify-center"><Gear size={14} /></button>
      </div>
      {RAIL.map((tool) => (
        <button
          key={tool.label}
          aria-label={tool.label}
          className={clsx("flex items-center justify-center", tool.active ? "mx-0.5 my-px h-5 rounded-sm border border-[#a8a8a8] bg-[#ededed]" : "h-[22px]")}
        >
          <Icon>{tool.icon}</Icon>
        </button>
      ))}
    </nav>
  );
}

export default function App() {
  return (
    <div className="flex h-screen min-h-[640px] flex-col overflow-hidden border-r-[3px] border-b border-[#7a7a7a] bg-[#dddcd7] font-['Liberation_Sans','Noto_Sans_CJK_KR',sans-serif]">
      <TitleBar />
      <Toolbar />
      <div className="flex min-h-0 flex-1 pb-[7px]">
        <Sidebar />
        <ChartPanel />
        <ToolRail />
      </div>
    </div>
  );
}
